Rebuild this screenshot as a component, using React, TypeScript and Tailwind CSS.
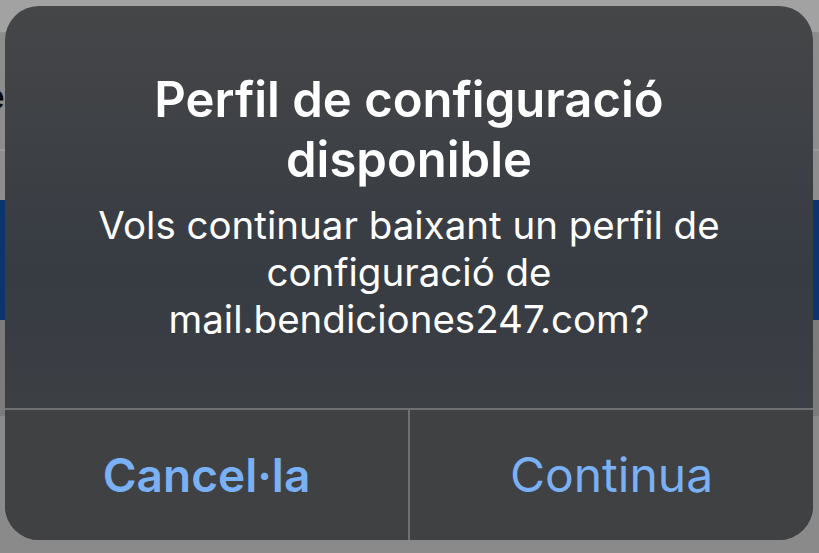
export default function App() {
  return (
    <div className="relative w-[819px] h-[553px] overflow-hidden bg-[#8b8b8b] font-['Inter','Noto_Sans',sans-serif]">
      {/* page behind the alert */}
      <div className="h-[34px] bg-[#a2a2a2] border-b-2 border-[#8f8f8f]" />
      <div className="h-[117px] bg-[#8d8d8d] border-b-2 border-[#9a9a9a] pt-[46px]">
        <span className="block -ml-[15px] text-[34px] leading-none text-black">e</span>
      </div>
      <div className="h-[49px] bg-[#8e8e8e]" />
      <div className="h-[120px] bg-[#0b3470]" />
      <div className="h-[96px] bg-[#7c7c7c]" />
      <div className="h-[135px] bg-[#8a8a8a]" />

      {/* alert */}
      <div className="absolute left-[5px] top-[6px] w-[808px] h-[534px] rounded-[34px] overflow-hidden flex flex-col bg-gradient-to-b from-[#454648] via-[#373c43] to-[#414245]">
        <div className="flex-1 flex flex-col items-center text-center text-white px-6 pt-[64px]">
          <h1 className="text-[49px] leading-[60px] font-semibold">
            Perfil de configuració
            <br />
            disponible
          </h1>
          <p className="mt-[12px] text-[38.5px] leading-[47px] font-normal whitespace-nowrap">
            Vols continuar baixant un perfil de
            <br />
            configuració de
            <br />
            mail.bendiciones247.com?
          </p>
        </div>
        <div className="h-[132px] flex border-t-2 border-[#6f7072] bg-[#404143]">
          <button className="flex-1 flex items-center justify-center text-[46px] font-semibold text-[#7ab0f4]">
            Cancel·la
          </button>
          <div className="w-[2px] bg-[#6f7072]" />
          <button className="flex-1 flex items-center justify-center text-[48px] font-normal text-[#7ab0f4]">
            Continua
          </button>
        </div>
      </div>
    </div>
  );
}
